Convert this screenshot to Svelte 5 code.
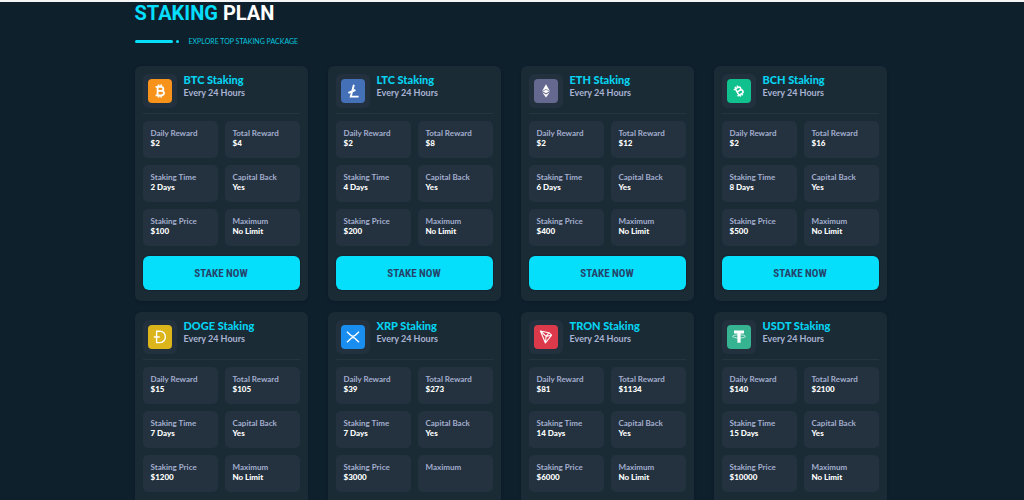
<script>
  const plans = [
    { coin: "BTC", color: "#f7931a", reward: "$2", total: "$4", time: "2 Days", price: "$100", max: "No Limit" },
    { coin: "LTC", color: "#4470b8", reward: "$2", total: "$8", time: "4 Days", price: "$200", max: "No Limit" },
    { coin: "ETH", color: "#66698f", reward: "$2", total: "$12", time: "6 Days", price: "$400", max: "No Limit" },
    { coin: "BCH", color: "#10c18e", reward: "$2", total: "$16", time: "8 Days", price: "$500", max: "No Limit" },
    { coin: "DOGE", color: "#dbb519", reward: "$15", total: "$105", time: "7 Days", price: "$1200", max: "No Limit" },
    { coin: "XRP", color: "#198ef0", reward: "$39", total: "$273", time: "7 Days", price: "$3000", max: "" },
    { coin: "TRON", color: "#dc3a4b", reward: "$81", total: "$1134", time: "14 Days", price: "$6000", max: "No Limit" },
    { coin: "USDT", color: "#36b391", reward: "$140", total: "$2100", time: "15 Days", price: "$10000", max: "No Limit" },
  ];

  function details(plan) {
    return [
      ["Daily Reward", plan.reward],
      ["Total Reward", plan.total],
      ["Staking Time", plan.time],
      ["Capital Back", "Yes"],
      ["Staking Price", plan.price],
      ["Maximum", plan.max],
    ];
  }
</script>

{#snippet bitcoin()}
  <path
    d="M7.6 7.9h5.2c3.4 0 3.4 4 0 4H9.8h3.4c3.8 0 3.8 4.4 0 4.4H7.6M9.6 7.9v8.4M10.6 5.6v2.2M13.2 5.6v2.2M10.6 16.4v2.2M13.2 16.4v2.2"
    fill="none"
    stroke="#fff"
    stroke-width="1.8"
  />
{/snippet}

<section class="staking">
  <div class="container">
    <header class="heading">
      <h2><span>STAKING</span> PLAN</h2>
      <div class="subtitle">
        <i class="line"></i>
        <i class="dot"></i>
        <p>EXPLORE TOP STAKING PACKAGE</p>
      </div>
    </header>

    <div class="plans">
      {#each plans as plan (plan.coin)}
        <article class="card">
          <div class="card-head">
            <div class="coin">
              <svg viewBox="0 0 24 24" aria-hidden="true">
                <rect width="24" height="24" rx="4" fill={plan.color} />
                {#if plan.coin === "BTC"}
                  {@render bitcoin()}
                {:else if plan.coin === "LTC"}
                  <path d="M12.9 5.8 9.8 17.6h7.8M7.4 13.8l7-2.8" fill="none" stroke="#fff" stroke-width="1.9" />
                {:else if plan.coin === "ETH"}
                  <path d="M12 5.2 8.2 12 12 14.2 15.8 12z" fill="#fff" />
                  <path d="M8.2 13.3 12 18.6l3.8-5.3L12 15.5z" fill="#fff" />
                  <path d="m8.6 12 3.4-1.6 3.4 1.6" fill="none" stroke="#66698f" stroke-width=".7" />
                {:else if plan.coin === "BCH"}
                  <g transform="rotate(-30 12 12) translate(1.6 1.6) scale(.86)">
                    {@render bitcoin()}
                  </g>
                {:else if plan.coin === "DOGE"}
                  <path d="M8.6 6.2h3.2c7.4 0 7.4 11.4 0 11.4H8.6zM5.8 12h6" fill="none" stroke="#fff" stroke-width="1.4" />
                {:else if plan.coin === "XRP"}
                  <path
                    d="M6 6.8l3.4 3.3c1.5 1.5 3.7 1.5 5.2 0L18 6.8M6 17.2l3.4-3.3c1.5-1.5 3.7-1.5 5.2 0l3.4 3.3"
                    fill="none"
                    stroke="#fff"
                    stroke-width="1.4"
                  />
                {:else if plan.coin === "TRON"}
                  <path
                    d="M6.4 6 15 7.7l2.6 2.5L11.4 18zM6.4 6l5.7 5.4L15 7.7M12.1 11.4l5.5-1.2M12.1 11.4 11.4 18"
                    fill="none"
                    stroke="#fff"
                    stroke-width="1.1"
                    stroke-linejoin="round"
                  />
                {:else}
                  <path d="M7 5.6h10v2.8h-3.4v9.4h-3.2V8.4H7z" fill="#fff" />
                  <ellipse cx="12" cy="11.4" rx="6.3" ry="1.6" fill="none" stroke="#fff" stroke-width=".7" />
                {/if}
              </svg>
            </div>
            <div>
              <h3>{plan.coin} Staking</h3>
              <p>Every 24 Hours</p>
            </div>
          </div>

          <dl>
            {#each details(plan) as [label, value]}
              <div class="tile">
                <dt>{label}</dt>
                <dd>{value}</dd>
              </div>
            {/each}
          </dl>

          <button type="button">STAKE NOW</button>
        </article>
      {/each}
    </div>
  </div>
</section>

<style>
  :global(body) {
    background: #0f202d;
    overflow: hidden;
  }

  .staking {
    border-top: 2px solid #f4f5f6;
    padding: 0 18px 24px 15px;
    background: #0f202d;
    font-family: Lato, "Open Sans", sans-serif;
  }

  .container {
    max-width: 752px;
    margin: 0 auto;
  }

  h2,
  h3,
  p,
  dl,
  dd {
    margin: 0;
  }

  .heading {
    padding-bottom: 20px;
  }

  h2 {
    color: #fff;
    font: 700 20px/22px Roboto, sans-serif;
  }

  h2 span {
    color: #05dffc;
  }

  .subtitle {
    display: flex;
    align-items: center;
    margin-top: 12px;
  }

  .line,
  .dot {
    height: 3px;
    border-radius: 2px;
    background: #05dffc;
  }

  .line {
    width: 38px;
  }

  .dot {
    width: 3px;
    margin: 0 10px 0 3px;
  }

  .subtitle p {
    color: #05c5df;
    font-size: 7px;
    line-height: 10px;
  }

  .plans {
    display: grid;
    grid-template-columns: repeat(auto-fit, minmax(160px, 1fr));
    gap: 11px 20px;
  }

  .card {
    padding: 8px 8px 11px;
    border-radius: 6px;
    background: #1b2b36;
    box-shadow: 0 1px 3px rgba(0, 0, 0, 0.2);
  }

  .card-head {
    display: flex;
    gap: 7px;
    padding-bottom: 5px;
    border-bottom: 1px solid #25343f;
    margin-bottom: 7px;
  }

  .coin {
    display: flex;
    padding: 5px;
    border-radius: 6px;
    background: #22313d;
  }

  .coin svg {
    width: 24px;
    height: 24px;
  }

  h3 {
    color: #05d3f0;
    font-size: 11px;
    font-weight: 900;
    line-height: 11px;
  }

  .card-head p {
    margin-top: 2px;
    color: #a9b3d2;
    font-size: 9px;
    font-weight: 700;
    line-height: 11px;
  }

  dl {
    display: grid;
    grid-template-columns: 1fr 1fr;
    gap: 7px;
  }

  .tile {
    box-sizing: border-box;
    min-height: 37px;
    padding: 7px 8px;
    border-radius: 5px;
    background: #23323e;
    font-size: 8px;
    line-height: 10px;
  }

  dt {
    color: #a3aecf;
    font-weight: 700;
  }

  dd {
    color: #fff;
    font-weight: 900;
  }

  button {
    display: block;
    width: 100%;
    height: 34px;
    margin-top: 10px;
    border: 0;
    border-radius: 6px;
    background: #05dffc;
    color: #24456b;
    box-shadow: 0 0 2px rgba(0, 0, 0, 0.6);
    font: 700 11px "Liberation Sans Narrow", "Roboto Condensed", sans-serif;
    cursor: pointer;
  }
</style>
